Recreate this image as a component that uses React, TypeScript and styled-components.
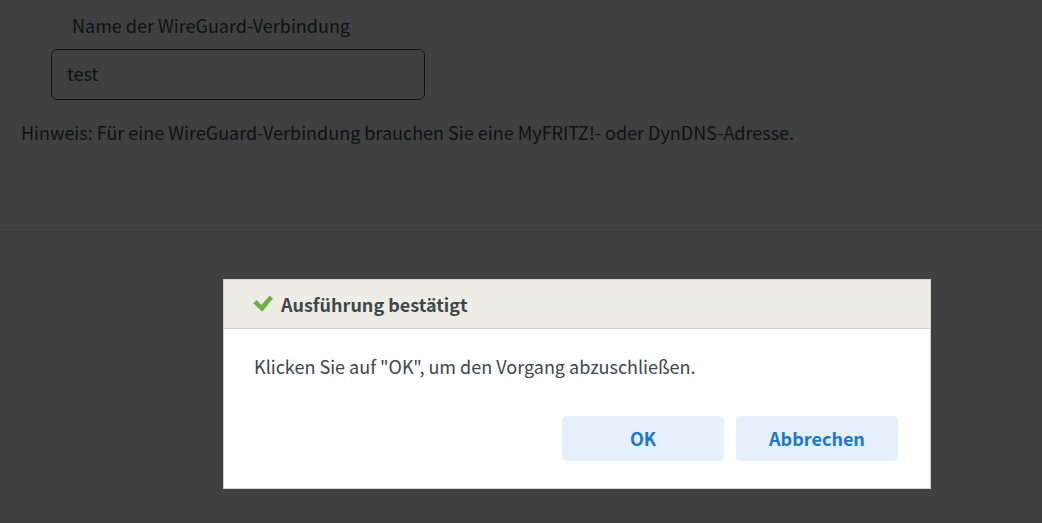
import React from "react";
import styled, { createGlobalStyle } from "styled-components";

const GlobalStyle = createGlobalStyle`
  *, *::before, *::after { box-sizing: border-box; }
  body {
    margin: 0;
    background: #fff;
    color: #3f464c;
    font-family: "Noto Sans CJK SC", "Noto Sans", sans-serif;
    font-size: 18px;
    line-height: 24px;
  }
`;

const Page = styled.main`
  min-height: 100vh;
  display: flex;
  flex-direction: column;
`;

const Form = styled.form`
  flex: 1;
  display: flex;
  flex-direction: column;
`;

const Settings = styled.section`
  padding: 13px 21px 87px;
  border-bottom: 1px solid #d8d8d8;
`;

const Field = styled.div`
  display: flex;
  flex-direction: column;
  align-items: flex-start;
  padding-left: 30px;
`;

const Label = styled.label`
  padding: 0 0 12px 21px;
`;

const TextInput = styled.input`
  width: 100%;
  max-width: 374px;
  height: 51px;
  padding: 0 15px 3px;
  border: 1px solid #3f464c;
  border-radius: 6px;
  background: #fff;
  color: inherit;
  font: inherit;
`;

const Hint = styled.p`
  margin: 20px 0 0;
`;

const Backdrop = styled.div`
  position: fixed;
  inset: 0;
  display: flex;
  align-items: flex-end;
  padding: 0 111px 34px 223px;
  background: rgba(0, 0, 0, 0.75);
`;

const Dialog = styled.section`
  flex: 1;
  border: 1px solid #d1d1d1;
  background: #fff;
`;

const DialogHeader = styled.header`
  display: flex;
  align-items: center;
  gap: 8px;
  height: 49px;
  padding: 0 29px;
  border-bottom: 1px solid #d1d3d1;
  background: #edede5;
`;

const DialogTitle = styled.h2`
  margin: 0;
  font-size: 18px;
  font-weight: 600;
`;

const DialogText = styled.p`
  margin: 0;
  padding: 25px 30px 0;
`;

const Actions = styled.footer`
  display: flex;
  justify-content: flex-end;
  gap: 12px;
  padding: 38px 32px 27px;
`;

const Button = styled.button`
  width: 162px;
  height: 45px;
  padding: 0 0 2px;
  border: 0;
  border-radius: 5px;
  background: #e6f0fa;
  color: #1a77d2;
  font: inherit;
  font-weight: 600;
  cursor: pointer;
`;

const CheckIcon = () => (
  <svg width="20" height="20" viewBox="0 0 20 20" aria-hidden="true">
    <path d="M0.3 9.2 3.6 6.1 8.4 11 16.6 1.6 20 4.6 9.2 17.8Z" fill="#6fae4a" />
  </svg>
);

export default function App() {
  return (
    <>
      <GlobalStyle />
      <Page>
        <Form>
          <Settings>
            <Field>
              <Label htmlFor="connection">Name der WireGuard-Verbindung</Label>
              <TextInput id="connection" type="text" defaultValue="test" />
            </Field>
            <Hint>
              Hinweis: Für eine WireGuard-Verbindung brauchen Sie eine MyFRITZ!- oder DynDNS-Adresse.
            </Hint>
          </Settings>
        </Form>
      </Page>
      <Backdrop>
        <Dialog role="dialog" aria-modal="true" aria-labelledby="dialog-title">
          <DialogHeader>
            <CheckIcon />
            <DialogTitle id="dialog-title">Ausführung bestätigt</DialogTitle>
          </DialogHeader>
          <DialogText>Klicken Sie auf "OK", um den Vorgang abzuschließen.</DialogText>
          <Actions>
            <Button type="button">OK</Button>
            <Button type="button">Abbrechen</Button>
          </Actions>
        </Dialog>
      </Backdrop>
    </>
  );
}
